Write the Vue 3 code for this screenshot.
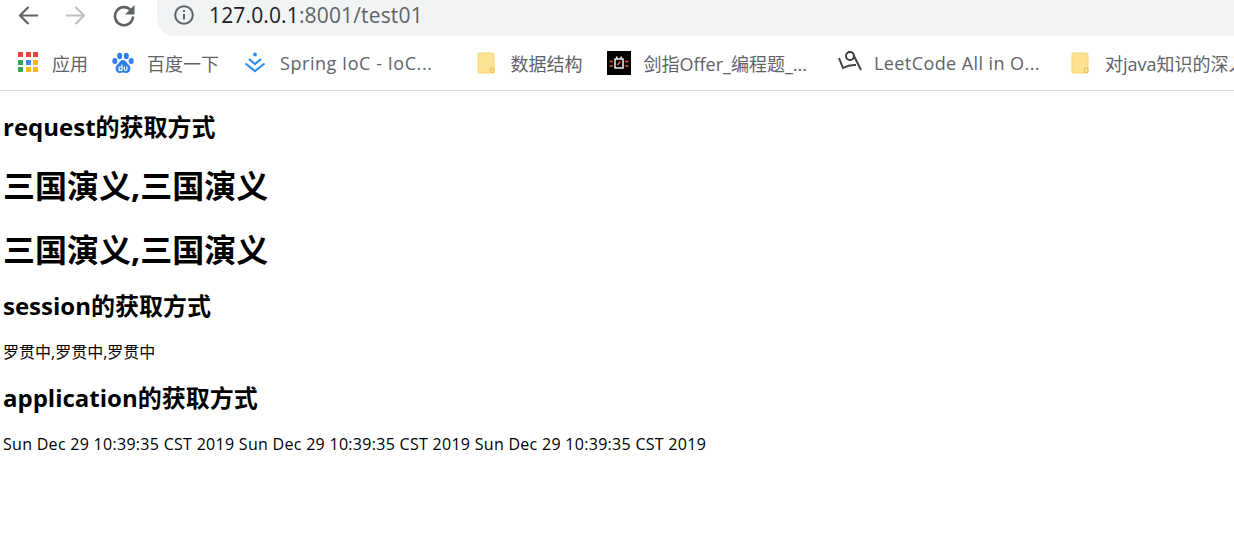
<script setup>
const apps = ['#ea4335','#ea4335','#ea4335','#34a853','#4285f4','#fbbc05','#34a853','#fbbc05','#fbbc05']
</script>

<template>
  <div class="page">
    <header class="chrome">
      <div class="toolbar">
        <svg class="nav" width="24" height="24" viewBox="0 0 24 24"><path d="M22 12.500H4M12.500 4 4 12.500l8.500 8.500" fill="none" stroke="#5f6368" stroke-width="2.200"/></svg>
        <svg class="nav" width="24" height="24" viewBox="0 0 24 24"><path d="M2 12.500h18M11.500 4l8.500 8.500-8.500 8.500" fill="none" stroke="#bdc1c6" stroke-width="2.200"/></svg>
        <svg class="nav" width="24" height="24" viewBox="0 0 24 24"><path d="M19 7.500A9 9 0 1 0 21 13.500" fill="none" stroke="#5f6368" stroke-width="2.600"/><path d="M22.500 2v9.500H13z" fill="#5f6368"/></svg>
        <div class="omnibox">
          <svg width="20" height="20" viewBox="0 0 20 20"><circle cx="10" cy="10" r="8.800" fill="none" stroke="#5f6368" stroke-width="2"/><path d="M10 9v5.500M10 5v2" stroke="#5f6368" stroke-width="2"/></svg>
          <span class="url"><span class="host">127.0.0.1</span>:8001/test01</span>
        </div>
      </div>
      <nav class="bookmarks">
        <div class="mark m-apps">
          <span class="apps"><i v-for="(c, n) in apps" :key="n" :style="{ background: c }"></i></span>
          <span>应用</span>
        </div>
        <div class="mark m-baidu">
          <svg width="22" height="22" viewBox="0 0 22 22"><g fill="#2f7ff0"><ellipse cx="2.800" cy="9" rx="2.500" ry="3"/><ellipse cx="7.700" cy="4" rx="2.500" ry="3.200"/><ellipse cx="14.300" cy="4" rx="2.500" ry="3.200"/><ellipse cx="19.200" cy="9" rx="2.500" ry="3"/><path d="M11 8c-3 0-3.500 3-6 5-2.500 2.500-1.500 8 2.500 8 1.500 0 2.200-.5 3.500-.5s2 .5 3.500.5c4 0 5-5.500 2.500-8C14.500 11 14 8 11 8z"/></g><path d="M10 12.500v6M10 15h-2.800v3.300H10M12.300 14.500v2.800q0 1.200 1.300 1.200t1.300-1.200v-2.800" fill="none" stroke="#fff" stroke-width="1.200"/></svg>
          <span>百度一下</span>
        </div>
        <div class="mark m-spring">
          <svg width="22" height="22" viewBox="0 0 22 22"><circle cx="11" cy="2.500" r="1.900" fill="#2c8ff0"/><path d="M5 7l6 5 6-5M1.500 11.500 11 19l9.500-7.500" fill="none" stroke="#2c8ff0" stroke-width="2.200"/></svg>
          <span class="wide">Spring IoC - IoC...</span>
        </div>
        <div class="mark m-folder">
          <svg width="20" height="22" viewBox="0 0 20 22"><path d="M1 2a1 1 0 0 1 1-1h13a2 2 0 0 1 2 2v17a1 1 0 0 1-1 1H2a1 1 0 0 1-1-1z" fill="#fde293" stroke="#f8d775"/><rect x="13.500" y="16" width="3.500" height="4.500" rx="1" fill="none" stroke="#e6b83c"/></svg>
          <span>数据结构</span>
        </div>
        <div class="mark m-offer">
          <svg width="24" height="24" viewBox="0 0 24 24"><rect width="24" height="24" fill="#000"/><path d="M8 8h8v9H8zM9.500 5.500 10.500 8M14.500 5.500 13.500 8" fill="none" stroke="#eee" stroke-width="1.500"/><path d="M2.500 10.500h3.500M2.500 15h3.500M18 10.500h3.500M18 15h3.500M10.500 14l3-3.500" stroke="#e8582c" stroke-width="1.700"/></svg>
          <span>剑指Offer_编程题_...</span>
        </div>
        <div class="mark m-leet">
          <svg class="leet" width="24" height="24" viewBox="0 0 24 24"><circle cx="12" cy="6" r="4" fill="none" stroke="#333" stroke-width="1.800"/><path d="M1 8l4 10q6-3.500 13-3" fill="none" stroke="#444" stroke-width="2"/><path d="M15.500 5 23 20" fill="none" stroke="#444" stroke-width="2"/></svg>
          <span class="wider">LeetCode All in O...</span>
        </div>
        <div class="mark m-folder2">
          <svg width="20" height="22" viewBox="0 0 20 22"><path d="M1 2a1 1 0 0 1 1-1h13a2 2 0 0 1 2 2v17a1 1 0 0 1-1 1H2a1 1 0 0 1-1-1z" fill="#fde293" stroke="#f8d775"/><rect x="13.500" y="16" width="3.500" height="4.500" rx="1" fill="none" stroke="#e6b83c"/></svg>
          <span>对java知识的深入</span>
        </div>
      </nav>
    </header>
    <main class="content">
      <h2 class="first">request的获取方式</h2>
      <h1>三国演义,三国演义</h1>
      <h1 class="last">三国演义,三国演义</h1>
      <h2>session的获取方式</h2>
      <p>罗贯中,罗贯中,罗贯中</p>
      <h2>application的获取方式</h2>
      <p class="date">Sun Dec 29 10:39:35 CST 2019 Sun Dec 29 10:39:35 CST 2019 Sun Dec 29 10:39:35 CST 2019</p>
    </main>
  </div>
</template>

<style>
html, body { margin: 0; background: #fff; overflow: hidden; }
</style>

<style scoped>
.page {
  width: 1234px;
  height: 543px;
  overflow: hidden;
  font-family: "Open Sans", "Noto Sans CJK SC", sans-serif;
  color: #000;
}
.chrome {
  height: 90px;
  border-bottom: 1px solid #dadce0;
}
.toolbar {
  height: 36px;
  display: flex;
  align-items: flex-start;
  padding-left: 16px;
  gap: 24px;
}
.nav { margin-top: 3px; }
.omnibox {
  flex: 1;
  height: 36px;
  box-sizing: border-box;
  margin-left: -3px;
  padding: 0 0 6px 17px;
  display: flex;
  align-items: center;
  gap: 15px;
  background: #f1f3f4;
  border-radius: 0 0 0 18px;
}
.url {
  font-size: 21px;
  color: #5f6368;
  white-space: nowrap;
  letter-spacing: .15px;
}
.host { color: #202124; }
.bookmarks {
  height: 54px;
  display: flex;
  align-items: center;
  white-space: nowrap;
  padding-left: 18px;
  font-size: 18px;
  color: #5f6368;
  overflow: hidden;
}
.mark {
  display: flex;
  align-items: center;
  flex: none;
}
.wide { letter-spacing: .55px; }
.wider { letter-spacing: .42px; }
.apps {
  display: grid;
  grid-template-columns: repeat(3, 5px);
  grid-auto-rows: 5px;
  gap: 2.500px;
  width: 20px;
  margin-right: 14px;
  position: relative;
  top: -1px;
}
.apps i { display: block; width: 5px; height: 5px; }
.leet { position: relative; top: -1px; }
.m-apps { margin-right: 24px; }
.m-baidu svg { margin-right: 13px; }
.m-baidu { margin-right: 25px; }
.m-spring svg { margin-right: 14px; }
.m-spring { margin-right: 45px; }
.m-folder svg { margin-right: 13px; }
.m-folder { margin-right: 25px; }
.m-offer svg { margin-right: 12px; }
.m-offer { margin-right: 31px; }
.m-leet svg { margin-right: 12px; }
.m-leet { margin-right: 31px; }
.m-folder2 svg { margin-right: 14px; }
.content {
  padding: 20px 3px 0;
}
h1, h2, p { margin: 0; font-weight: 700; }
h2 { font-size: 24px; line-height: 32px; margin-bottom: 20px; }
h1 { font-size: 32px; line-height: 43px; margin-bottom: 21px; }
h2.first { margin-bottom: 21px; }
h1.last { margin-bottom: 19px; }
p { font-size: 16px; line-height: 21px; font-weight: 400; margin-bottom: 19px; }
.date { letter-spacing: .29px; }
</style>
